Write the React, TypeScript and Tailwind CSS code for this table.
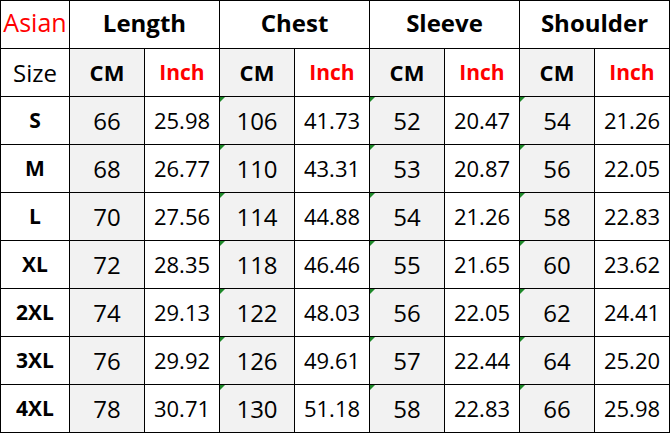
const sizes = [
  { size: 'S', v: ['66', '25.98', '106', '41.73', '52', '20.47', '54', '21.26'] },
  { size: 'M', v: ['68', '26.77', '110', '43.31', '53', '20.87', '56', '22.05'] },
  { size: 'L', v: ['70', '27.56', '114', '44.88', '54', '21.26', '58', '22.83'] },
  { size: 'XL', v: ['72', '28.35', '118', '46.46', '55', '21.65', '60', '23.62'] },
  { size: '2XL', v: ['74', '29.13', '122', '48.03', '56', '22.05', '62', '24.41'] },
  { size: '3XL', v: ['76', '29.92', '126', '49.61', '57', '22.44', '64', '25.20'] },
  { size: '4XL', v: ['78', '30.71', '130', '51.18', '58', '22.83', '66', '25.98'] },
];

const groups = ['Length', 'Chest', 'Sleeve', 'Shoulder'];

function Cell({ children, className = '' }: { children?: React.ReactNode; className?: string }) {
  return <div className={`relative flex items-center justify-center ${className}`}>{children}</div>;
}

// little green corner mark, like excel's "number stored as text"
function Flag() {
  return <span className="absolute left-0 top-0 h-0 w-0 border-r-[5px] border-t-[5px] border-r-transparent border-t-[#1e8a2a]" />;
}

export default function App() {
  return (
    <div className="w-[670px] h-[433px] bg-white" style={{ fontFamily: '"Open Sans", "Noto Sans", sans-serif' }}>
      <div className="grid grid-cols-[68px_repeat(8,74px)] grid-rows-[repeat(9,47px)] gap-px bg-black p-px">
        <Cell className="bg-white pb-[3px] text-[25px] text-[#ff0000]">Asian</Cell>
        {groups.map((g) => (
          <Cell key={g} className="col-span-2 bg-white pb-[3px] text-[24px] font-bold text-black">
            {g}
          </Cell>
        ))}

        <Cell className="bg-white text-[24px] text-black">Size</Cell>
        {groups.map((g) => (
          <div key={g} className="contents">
            <Cell className="bg-[#f2f2f2] text-[22px] font-bold text-black">CM</Cell>
            <Cell className="bg-white text-[21px] font-bold text-[#ff0000]">Inch</Cell>
          </div>
        ))}

        {sizes.map((r) => (
          <div key={r.size} className="contents">
            <Cell className="bg-white text-[21px] font-bold text-black">{r.size}</Cell>
            {r.v.map((val, i) =>
              i % 2 === 0 ? (
                <Cell key={i} className="bg-[#f2f2f2] text-[24px] text-black">
                  {i > 0 && <Flag />}
                  {val}
                </Cell>
              ) : (
                <Cell key={i} className="bg-white text-[22px] text-black">
                  {val}
                </Cell>
              ),
            )}
          </div>
        ))}
      </div>
    </div>
  );
}
